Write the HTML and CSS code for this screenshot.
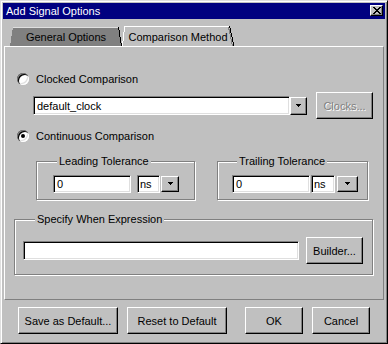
FILE: index.html
```html
<!DOCTYPE html>
<html lang="en">

<head>
  <meta charset="UTF-8">
  <title>Add Signal Options</title>
  <link rel="stylesheet" href="styles.css">
</head>

<body>
  <div class="window">
    <div class="titlebar">
      <span class="title">Add Signal Options</span>
      <span class="close-btn">
        <svg width="8" height="7" viewBox="0 0 8 7" shape-rendering="crispEdges">
          <path d="M0 0h2v1h1v1h2v-1h1v-1h2v1h-1v1h-1v1h-1v1h1v1h1v1h1v1h-2v-1h-1v-1h-2v1h-1v1h-2v-1h1v-1h1v-1h1v-1h-1v-1h-1v-1h-1z" fill="#000"/>
        </svg>
      </span>
    </div>

    <div class="tabs">
      <div class="tab tab-inactive">
        <svg width="114" height="20" viewBox="0 0 114 20" shape-rendering="crispEdges">
          <polygon points="1,20 4,1 110,1 113,20" fill="#808080"/>
          <path d="M4 1.5H109" stroke="#dfdfdf"/>
          <path d="M109.5 1L112.5 20" stroke="#000"/>
        </svg>
        <span>General Options</span>
      </div>
      <div class="tab tab-active">
        <svg width="114" height="21" viewBox="0 0 114 21" shape-rendering="crispEdges">
          <polygon points="1,21 3,1 109,1 113,21" fill="#c0c0c0"/>
          <path d="M1.5 21L3.5 2" stroke="#fff"/>
          <path d="M3 1.5H108" stroke="#fff"/>
          <path d="M107.5 2L111.5 21" stroke="#808080"/>
          <path d="M108.5 1L113 21" stroke="#000"/>
        </svg>
        <span>Comparison Method</span>
      </div>
    </div>

    <div class="panel">
      <div class="radio-row first">
        <span class="radio"></span>
        <span>Clocked Comparison</span>
      </div>

      <div class="clock-row">
        <div class="field combo-field">default_clock</div>
        <div class="btn arrow-btn combo-arrow">
          <svg width="5" height="4" viewBox="0 0 5 4" shape-rendering="crispEdges"><path d="M0 0h5v1h-1v1h-1v1h-1v-1h-1v-1h-1z" fill="#000"/></svg>
        </div>
        <div class="btn clocks-btn disabled">Clocks...</div>
      </div>

      <div class="radio-row second">
        <span class="radio checked"></span>
        <span>Continuous Comparison</span>
      </div>

      <div class="tolerance-row">
        <div class="group leading">
          <span class="group-label">Leading Tolerance</span>
          <div class="unit-row">
            <div class="field value-field">0</div>
            <div class="field unit-field">ns</div>
            <div class="btn arrow-btn unit-arrow">
              <svg width="5" height="4" viewBox="0 0 5 4" shape-rendering="crispEdges"><path d="M0 0h5v1h-1v1h-1v1h-1v-1h-1v-1h-1z" fill="#000"/></svg>
            </div>
          </div>
        </div>
        <div class="group trailing">
          <span class="group-label">Trailing Tolerance</span>
          <div class="unit-row">
            <div class="field value-field">0</div>
            <div class="field unit-field">ns</div>
            <div class="btn arrow-btn unit-arrow">
              <svg width="5" height="4" viewBox="0 0 5 4" shape-rendering="crispEdges"><path d="M0 0h5v1h-1v1h-1v1h-1v-1h-1v-1h-1z" fill="#000"/></svg>
            </div>
          </div>
        </div>
      </div>

      <div class="group when">
        <span class="group-label">Specify When Expression</span>
        <div class="when-row">
          <div class="field when-field"></div>
          <div class="btn builder-btn">Builder...</div>
        </div>
      </div>
    </div>

    <div class="button-bar">
      <div class="btn wide-btn">Save as Default...</div>
      <div class="btn wide-btn reset">Reset to Default</div>
      <div class="btn small-btn ok">OK</div>
      <div class="btn small-btn cancel">Cancel</div>
    </div>
  </div>
</body>

</html>
```

FILE: styles.css
```css
* {
  margin: 0;
  padding: 0;
  box-sizing: border-box;
}

body {
  font-family: 'Liberation Sans', Arial, sans-serif;
  font-size: 11px;
  color: #000;
  background: #c0c0c0;
}

.window {
  width: 388px;
  height: 344px;
  padding: 2px;
  background: #c0c0c0;
  border: 1px solid;
  border-color: #dfdfdf #000 #000 #dfdfdf;
  box-shadow: inset 1px 1px #fff, inset -1px -1px #808080;
}

/* title bar */
.titlebar {
  height: 16px;
  background: #000080;
  color: #fff;
  display: flex;
  align-items: center;
  justify-content: space-between;
  padding: 0 2px 0 3px;
}

.title {
  line-height: 16px;
}

.close-btn {
  width: 13px;
  height: 11px;
  background: #c0c0c0;
  border: 1px solid;
  border-color: #fff #000 #000 #fff;
  box-shadow: inset -1px -1px #808080;
  display: flex;
  align-items: center;
  justify-content: center;
  margin-bottom: 1px;
}

/* tabs */
.tabs {
  display: flex;
  align-items: flex-end;
  height: 21px;
  margin-top: 6px;
  padding-left: 6px;
}

.tab {
  display: grid;
}

.tab > * {
  grid-area: 1 / 1;
}

.tab span {
  align-self: center;
  justify-self: center;
  padding-top: 1px;
}

.tab-active {
  margin-left: -2px;
}

.tab-active span {
  padding-top: 2px;
}

/* main panel */
.panel {
  margin: 0 1px;
  height: 254px;
  border: 1px solid;
  border-color: #fff #808080 #808080 #fff;
}

.radio-row {
  display: flex;
  align-items: center;
  gap: 7px;
  height: 13px;
  padding-left: 12px;
}

.radio-row.first {
  margin-top: 25px;
}

.radio-row.second {
  margin-top: 10px;
}

.radio {
  width: 12px;
  height: 12px;
  border-radius: 50%;
  background: #fff;
  box-shadow:
    inset 1px 1px #808080,
    inset 2px 2px #000,
    inset -1px -1px #fff,
    inset -2px -2px #dfdfdf;
  display: flex;
  align-items: center;
  justify-content: center;
  flex-shrink: 0;
}

.radio.checked::after {
  content: '';
  width: 4px;
  height: 4px;
  border-radius: 50%;
  background: #000;
}

.field {
  background: #fff;
  border: 1px solid;
  border-color: #808080 #fff #fff #808080;
  box-shadow: inset 1px 1px #000, inset -1px -1px #dfdfdf;
  padding: 0 3px;
  display: flex;
  align-items: center;
}

.btn {
  background: #c0c0c0;
  border: 1px solid;
  border-color: #fff #000 #000 #fff;
  box-shadow: inset -1px -1px #808080;
  display: flex;
  align-items: center;
  justify-content: center;
}

.btn.disabled {
  color: #808080;
  text-shadow: 1px 1px #fff;
}

.clock-row {
  display: flex;
  align-items: center;
  height: 27px;
  margin: 7px 0 0 28px;
}

.combo-field {
  width: 257px;
  height: 19px;
}

.arrow-btn svg {
  display: block;
}

.combo-arrow {
  width: 17px;
  height: 18px;
}

.clocks-btn {
  width: 57px;
  height: 27px;
  margin-left: 9px;
}

/* group boxes */
.tolerance-row {
  display: flex;
  margin-top: 19px;
}

.group {
  border: 1px solid #808080;
  box-shadow: inset 1px 1px #fff, 1px 1px #fff;
}

.group-label {
  display: block;
  width: fit-content;
  margin-top: -7px;
  padding: 0 2px;
  line-height: 13px;
  background: #c0c0c0;
}

.leading {
  width: 159px;
  margin-left: 31px;
  padding: 0 0 6px 16px;
}

.leading .group-label {
  margin-left: 4px;
}

.trailing {
  width: 151px;
  margin-left: 22px;
  padding: 0 0 6px 14px;
}

.trailing .group-label {
  margin-left: 5px;
}

.unit-row {
  display: flex;
  align-items: center;
  height: 18px;
  margin-top: 7px;
}

.value-field {
  width: 78px;
  height: 18px;
}

.unit-field {
  width: 23px;
  height: 18px;
  margin-left: 6px;
  padding: 0 2px;
}

.unit-arrow {
  width: 18px;
  height: 16px;
  margin-left: 1px;
}

.trailing .unit-field {
  width: 24px;
  margin-left: 1px;
}

.trailing .unit-arrow {
  width: 21px;
  margin-left: 2px;
}

.when {
  width: 359px;
  margin: 19px 0 0 9px;
  padding: 0 0 10px 8px;
}

.when .group-label {
  margin-left: 12px;
}

.when-row {
  display: flex;
  align-items: center;
  height: 27px;
  margin-top: 11px;
}

.when-field {
  width: 276px;
  height: 19px;
}

.builder-btn {
  width: 57px;
  height: 27px;
  margin-left: 7px;
}

/* bottom buttons */
.button-bar {
  display: flex;
  margin-top: 7px;
  padding-left: 15px;
}

.button-bar .btn {
  height: 27px;
}

.wide-btn {
  width: 100px;
}

.reset {
  margin-left: 9px;
}

.small-btn {
  width: 58px;
}

.ok {
  margin-left: 18px;
}

.cancel {
  margin-left: 9px;
}
```
